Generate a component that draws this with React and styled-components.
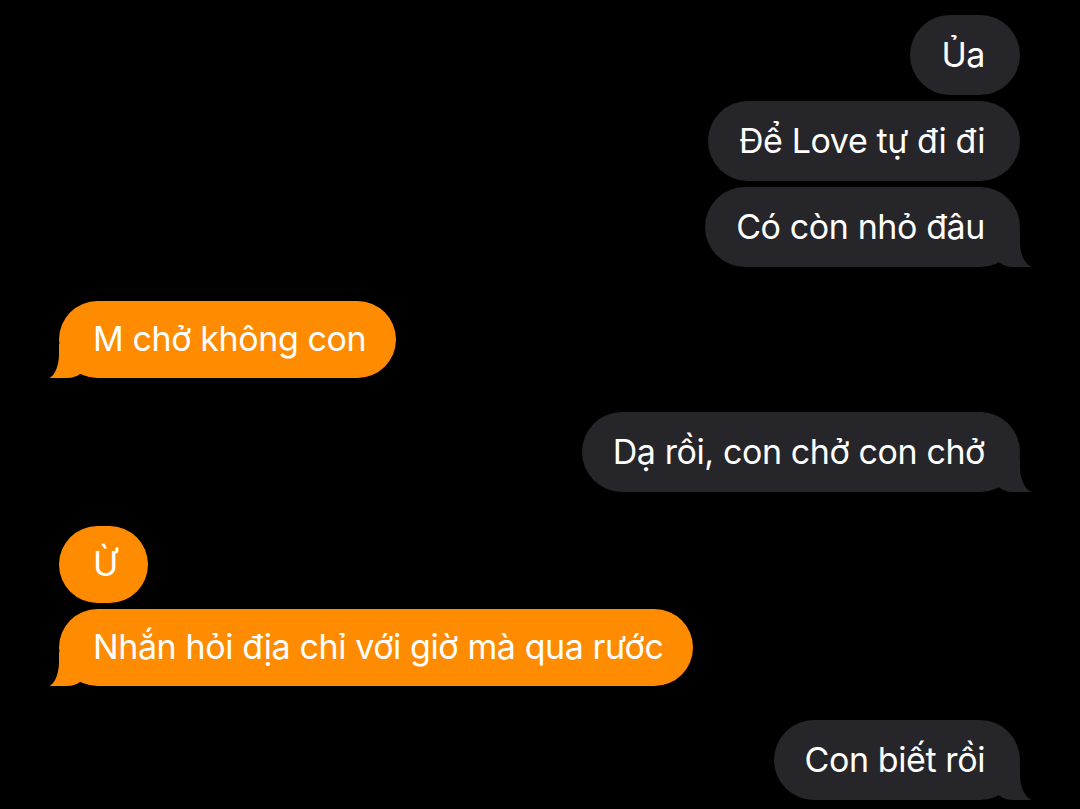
import styled, { createGlobalStyle } from 'styled-components';

const colors = {
  page: '#000000',
  received: '#FF8B00',
  sent: '#262529',
  text: '#FFFFFF'
};

const GlobalStyle = createGlobalStyle`
  html, body {
    margin: 0;
    padding: 0;
    background: ${colors.page};
  }
  body {
    font-family: Inter, "Noto Sans", "Liberation Sans", sans-serif;
    -webkit-font-smoothing: antialiased;
  }
`;

const Thread = styled.div`
  width: 1080px;
  height: 809px;
  box-sizing: border-box;
  padding: 15px 60px 0 59px;
  display: flex;
  flex-direction: column;
  overflow: hidden;
`;

const Row = styled.div`
  display: flex;
  justify-content: ${(p) => (p.$fromMe ? 'flex-end' : 'flex-start')};
  margin-top: ${(p) => (p.$newGroup ? '34px' : '6px')};

  &:first-child {
    margin-top: 0;
  }
`;

const sentTail = `
  &::before {
    content: '';
    position: absolute;
    z-index: 0;
    bottom: 0;
    right: -15px;
    width: 42px;
    height: 34px;
    background: ${colors.sent};
    border-bottom-left-radius: 20px 16px;
  }
  &::after {
    content: '';
    position: absolute;
    z-index: 1;
    bottom: -1px;
    right: -40px;
    width: 40px;
    height: 36px;
    background: ${colors.page};
    border-bottom-left-radius: 16px 25px;
  }
`;

const receivedTail = `
  &::before {
    content: '';
    position: absolute;
    z-index: 0;
    bottom: 0;
    left: -12px;
    width: 40px;
    height: 34px;
    background: ${colors.received};
    border-bottom-right-radius: 20px 16px;
  }
  &::after {
    content: '';
    position: absolute;
    z-index: 1;
    bottom: -1px;
    left: -40px;
    width: 40px;
    height: 36px;
    background: ${colors.page};
    border-bottom-right-radius: 13px 25px;
  }
`;

const Bubble = styled.div`
  position: relative;
  box-sizing: border-box;
  height: ${(p) => (p.$fromMe ? '80px' : '77px')};
  display: flex;
  align-items: center;
  padding: ${(p) => (p.$fromMe ? '0 35px 2px 31px' : '0 30px 2px 34px')};
  border-radius: 40px;
  background: ${(p) => (p.$fromMe ? colors.sent : colors.received)};
  color: ${colors.text};
  font-size: 34px;
  letter-spacing: -0.4px;
  white-space: nowrap;

  ${(p) => p.$tail && (p.$fromMe ? sentTail : receivedTail)}
`;

const Text = styled.span`
  position: relative;
  z-index: 2;
`;

const messages = [
  { text: 'Ủa', fromMe: true },
  { text: 'Để Love tự đi đi', fromMe: true },
  { text: 'Có còn nhỏ đâu', fromMe: true, tail: true },
  { text: 'M chở không con', fromMe: false, tail: true, newGroup: true },
  { text: 'Dạ rồi, con chở con chở', fromMe: true, tail: true, newGroup: true },
  { text: 'Ừ', fromMe: false, newGroup: true },
  { text: 'Nhắn hỏi địa chỉ với giờ mà qua rước', fromMe: false, tail: true },
  { text: 'Con biết rồi', fromMe: true, tail: true, newGroup: true }
];

export default function App() {
  return (
    <>
      <GlobalStyle />
      <Thread>
        {messages.map((m, i) => (
          <Row key={i} $fromMe={m.fromMe} $newGroup={m.newGroup}>
            <Bubble $fromMe={m.fromMe} $tail={m.tail}>
              <Text>{m.text}</Text>
            </Bubble>
          </Row>
        ))}
      </Thread>
    </>
  );
}
